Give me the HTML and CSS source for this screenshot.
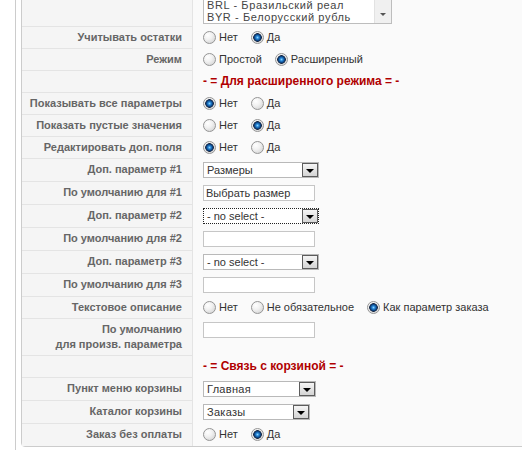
FILE: index.html
```html
<!DOCTYPE html>
<html lang="ru">
<head>
<meta charset="utf-8">
<title>Настройки</title>
<link rel="stylesheet" href="styles.css">
</head>
<body>
<div class="page">
  <div class="box">
    <fieldset class="adminform">
      <div class="row first">
        <div class="key"></div>
        <div class="val">
          <div class="listbox">
            <div class="items">
              <div>AUD - Австралийский доллар</div>
              <div>AZN - Азербайджанский манат</div>
              <div>BRL - Бразильский реал</div>
              <div>BYR - Белорусский рубль</div>
            </div>
            <div class="scroll"><span class="down"></span></div>
          </div>
        </div>
      </div>
      <div class="row">
        <div class="key">Учитывать остатки</div>
        <div class="val">
          <label class="opt"><input class="radio" type="radio" name="r1">Нет</label>
          <label class="opt"><input class="radio" type="radio" name="r1" checked>Да</label>
        </div>
      </div>
      <div class="row">
        <div class="key">Режим</div>
        <div class="val">
          <label class="opt"><input class="radio" type="radio" name="r2">Простой</label>
          <label class="opt"><input class="radio" type="radio" name="r2" checked>Расширенный</label>
        </div>
      </div>
      <div class="row">
        <div class="key"></div>
        <div class="val"><span class="heading">- = Для расширенного режима = -</span></div>
      </div>
      <div class="row">
        <div class="key">Показывать все параметры</div>
        <div class="val">
          <label class="opt"><input class="radio" type="radio" name="r3" checked>Нет</label>
          <label class="opt"><input class="radio" type="radio" name="r3">Да</label>
        </div>
      </div>
      <div class="row">
        <div class="key">Показать пустые значения</div>
        <div class="val">
          <label class="opt"><input class="radio" type="radio" name="r4">Нет</label>
          <label class="opt"><input class="radio" type="radio" name="r4" checked>Да</label>
        </div>
      </div>
      <div class="row">
        <div class="key">Редактировать доп. поля</div>
        <div class="val">
          <label class="opt"><input class="radio" type="radio" name="r5" checked>Нет</label>
          <label class="opt"><input class="radio" type="radio" name="r5">Да</label>
        </div>
      </div>
      <div class="row">
        <div class="key">Доп. параметр #1</div>
        <div class="val"><div class="select"><span class="txt">Размеры</span><span class="btn"></span></div></div>
      </div>
      <div class="row">
        <div class="key">По умолчанию для #1</div>
        <div class="val"><input class="text" type="text" value="Выбрать размер"></div>
      </div>
      <div class="row">
        <div class="key">Доп. параметр #2</div>
        <div class="val"><div class="select focus"><span class="txt">- no select -</span><span class="btn"></span></div></div>
      </div>
      <div class="row">
        <div class="key">По умолчанию для #2</div>
        <div class="val"><input class="text" type="text" value=""></div>
      </div>
      <div class="row">
        <div class="key">Доп. параметр #3</div>
        <div class="val"><div class="select"><span class="txt">- no select -</span><span class="btn"></span></div></div>
      </div>
      <div class="row">
        <div class="key">По умолчанию для #3</div>
        <div class="val"><input class="text" type="text" value=""></div>
      </div>
      <div class="row">
        <div class="key">Текстовое описание</div>
        <div class="val">
          <label class="opt"><input class="radio" type="radio" name="r6">Нет</label>
          <label class="opt"><input class="radio" type="radio" name="r6">Не обязательное</label>
          <label class="opt"><input class="radio" type="radio" name="r6" checked>Как параметр заказа</label>
        </div>
      </div>
      <div class="row">
        <div class="key">По умолчанию<br>для произв. параметра</div>
        <div class="val top"><input class="text" type="text" value=""></div>
      </div>
      <div class="row">
        <div class="key"></div>
        <div class="val"><span class="heading">- = Связь с корзиной = -</span></div>
      </div>
      <div class="row">
        <div class="key">Пункт меню корзины</div>
        <div class="val"><div class="select menu"><span class="txt">Главная</span><span class="btn"></span></div></div>
      </div>
      <div class="row">
        <div class="key">Каталог корзины</div>
        <div class="val"><div class="select catalog"><span class="txt">Заказы</span><span class="btn"></span></div></div>
      </div>
      <div class="row last">
        <div class="key">Заказ без оплаты</div>
        <div class="val">
          <label class="opt"><input class="radio" type="radio" name="r7">Нет</label>
          <label class="opt"><input class="radio" type="radio" name="r7" checked>Да</label>
        </div>
      </div>
    </fieldset>
  </div>
</div>
</body>
</html>
```

FILE: styles.css
```css
html {
  overflow: hidden;
}
html, body {
  margin: 0;
  padding: 0;
  background: #fff;
}
body {
  font-family: "Liberation Sans", Arial, sans-serif;
  font-size: 11px;
  color: #333;
}
.page {
  display: flow-root;
  margin-left: 15px;
  border-left: 1px solid #ccc;
  padding-left: 5px;
  height: 450px;
}
.adminform {
  margin: -30px 0 0;
  padding: 0;
  width: 640px;
  min-width: 0;
  border: 1px solid #ccc;
  border-radius: 0 0 4px 4px;
  background: #fafafa;
}
.row {
  display: grid;
  grid-template-columns: 171px 1fr;
}
.key {
  box-sizing: border-box;
  padding: 3px 10px 3px 2px;
  line-height: 15px;
  text-align: right;
  white-space: nowrap;
  font-weight: bold;
  color: #666;
  background: #f5f5f5;
  border-right: 1px solid #e4e4e4;
  border-bottom: 1px solid #e4e4e4;
}
.row.last .key {
  border-bottom: 0;
}
.val {
  padding: 3px 10px 4px;
  min-height: 15px;
  line-height: 15px;
  display: flex;
  align-items: center;
}
.val.top {
  align-items: flex-start;
}
.opt {
  display: flex;
  align-items: center;
  margin-right: 13px;
  white-space: nowrap;
}
.radio {
  -webkit-appearance: none;
  appearance: none;
  box-sizing: border-box;
  flex: none;
  width: 13px;
  height: 13px;
  margin: 0 3px 0 0;
  border: 1px solid #959595;
  border-radius: 50%;
  background: radial-gradient(circle at 35% 30%, #fff 0, #f1f1f1 40%, #cdcdcd 100%);
}
.radio:checked {
  background:
    radial-gradient(circle at 50% 50%, #8fd6ff 0, #2786d6 1.5px, #0c4686 3px, #1b2a44 4px, transparent 4.6px),
    radial-gradient(circle at 35% 30%, #fff 0, #f1f1f1 40%, #cdcdcd 100%);
}
.heading {
  color: #b00000;
  font-weight: bold;
  font-size: 12px;
}
.text {
  box-sizing: border-box;
  width: 112px;
  height: 16px;
  margin: 0;
  padding: 0 2px;
  border: 1px solid #c6c6c6;
  background: #fff;
  font-family: "Liberation Sans", Arial, sans-serif;
  font-size: 11px;
  color: #333;
  outline: none;
}
.select {
  box-sizing: border-box;
  width: 116px;
  height: 16px;
  border: 1px solid #b9b9b9;
  background: #fff;
  display: flex;
  align-items: center;
  color: #333;
}
.select.menu {
  width: 113px;
}
.select.catalog {
  width: 107px;
}
.select.focus {
  border: 1px dotted #222;
}
.select .txt {
  flex: 1;
  padding-left: 3px;
  line-height: 14px;
  white-space: nowrap;
  overflow: hidden;
}
.select.menu .txt,
.select.catalog .txt {
  letter-spacing: 0.3px;
}
.select .btn {
  box-sizing: border-box;
  flex: none;
  width: 16px;
  height: 14px;
  border: 1px solid #5c5c5c;
  background: linear-gradient(#f5f5f5, #d4d4d4);
  display: flex;
  align-items: center;
  justify-content: center;
}
.select .btn::after {
  content: "";
  margin-top: 2px;
  border-left: 4px solid transparent;
  border-right: 4px solid transparent;
  border-top: 4px solid #000;
}
.listbox {
  box-sizing: border-box;
  width: 189px;
  height: 50px;
  margin-bottom: -1px;
  border: 1px solid #bdbdbd;
  background: #fff;
  display: flex;
  overflow: hidden;
}
.listbox .items {
  flex: 1;
  padding-left: 3px;
  line-height: 12px;
  letter-spacing: 0.6px;
  color: #444;
  white-space: nowrap;
  overflow: hidden;
  display: flex;
  flex-direction: column;
  justify-content: flex-end;
}
.listbox .scroll {
  width: 16px;
  background: #f0f0f0;
  border-left: 1px solid #e2e2e2;
  display: flex;
  flex-direction: column;
  justify-content: flex-end;
}
.listbox .down {
  height: 17px;
  display: flex;
  align-items: center;
  justify-content: center;
}
.listbox .down::after {
  content: "";
  border-left: 3px solid transparent;
  border-right: 3px solid transparent;
  border-top: 3px solid #555;
}
```
